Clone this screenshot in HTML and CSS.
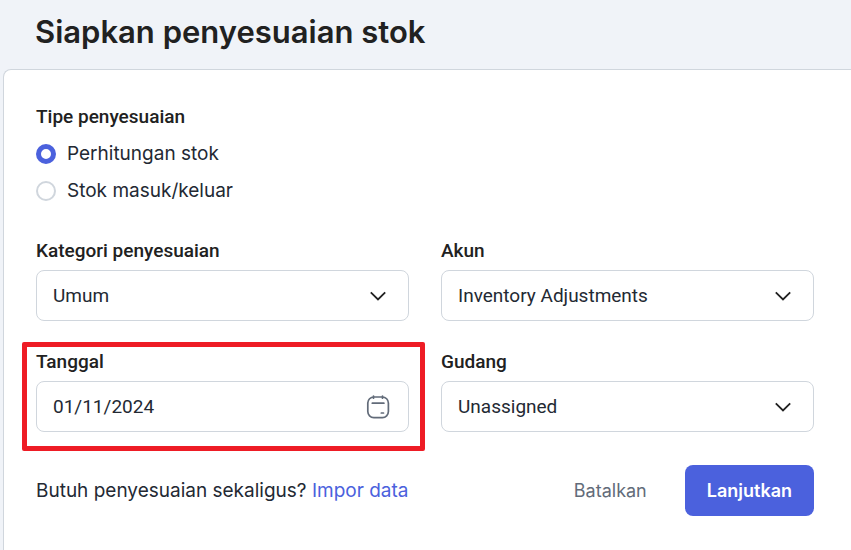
FILE: index.html
```html
<!DOCTYPE html>
<html lang="id">
<head>
  <meta charset="UTF-8">
  <title>Siapkan penyesuaian stok</title>
  <meta name="viewport" content="width=device-width, initial-scale=1">
  <link rel="stylesheet" href="styles.css">
</head>
<body>
  <header>
    <h1>Siapkan penyesuaian stok</h1>
  </header>

  <main>
    <form class="card">
      <fieldset class="type-group">
        <legend>Tipe penyesuaian</legend>
        <label class="radio">
          <input type="radio" name="type" value="count" checked>
          <span>Perhitungan stok</span>
        </label>
        <label class="radio">
          <input type="radio" name="type" value="inout">
          <span>Stok masuk/keluar</span>
        </label>
      </fieldset>

      <div class="fields">
        <div class="field">
          <label for="category">Kategori penyesuaian</label>
          <div class="control">
            <select id="category">
              <option>Umum</option>
            </select>
            <svg class="chevron" width="24" height="24" viewBox="0 0 24 24" fill="none" stroke="currentColor" stroke-width="1.8">
              <path d="M4.8 8.3l7.2 7.2 7.2-7.2"></path>
            </svg>
          </div>
        </div>

        <div class="field">
          <label for="account">Akun</label>
          <div class="control">
            <select id="account">
              <option>Inventory Adjustments</option>
            </select>
            <svg class="chevron" width="24" height="24" viewBox="0 0 24 24" fill="none" stroke="currentColor" stroke-width="1.8">
              <path d="M4.8 8.3l7.2 7.2 7.2-7.2"></path>
            </svg>
          </div>
        </div>

        <div class="field highlight">
          <label for="date">Tanggal</label>
          <div class="control">
            <input type="text" id="date" value="01/11/2024">
            <svg class="calendar" width="24" height="24" viewBox="0 0 24 24" fill="none" stroke="currentColor" stroke-width="1.7" stroke-linecap="round">
              <rect x="1.8" y="2" width="20.6" height="20.6" rx="6"></rect>
              <path d="M7.5 1v2.2M16.5 1v2.2M6.3 8.2h11.6"></path>
              <path d="M15.3 18h2.2"></path>
            </svg>
          </div>
        </div>

        <div class="field">
          <label for="warehouse">Gudang</label>
          <div class="control">
            <select id="warehouse">
              <option>Unassigned</option>
            </select>
            <svg class="chevron" width="24" height="24" viewBox="0 0 24 24" fill="none" stroke="currentColor" stroke-width="1.8">
              <path d="M4.8 8.3l7.2 7.2 7.2-7.2"></path>
            </svg>
          </div>
        </div>
      </div>

      <div class="actions">
        <p>Butuh penyesuaian sekaligus? <a href="#">Impor data</a></p>
        <div class="buttons">
          <button type="button" class="btn-text">Batalkan</button>
          <button type="submit" class="btn-primary">Lanjutkan</button>
        </div>
      </div>
    </form>
  </main>
</body>
</html>
```
FILE: styles.css
```css
:root {
  --primary: #4b61dd;
  --dark: #212121;
  --text: #232933;
  --gray: #626b79;
  --border: #d0d6dd;
  --page: #f0f3f8;
  --highlight: #ee1c25;
}

* {
  margin: 0;
  padding: 0;
  box-sizing: border-box;
}

body {
  font-family: Inter, sans-serif;
  font-size: 19px;
  line-height: 26px;
  background: var(--page);
  color: var(--text);
  min-height: 100vh;
  display: flex;
  flex-direction: column;
}

header {
  padding: 12px 35px 17px;
}

h1 {
  font-size: 31px;
  font-weight: 600;
  line-height: 40px;
  color: var(--dark);
}

main {
  flex: 1;
  display: flex;
  padding-left: 3px;
}

.card {
  flex: 1;
  background: white;
  border: 1px solid var(--border);
  border-width: 1px 0 0 1px;
  border-radius: 8px 0 0 0;
  padding: 34px 37px 34px 32px;
}

.type-group {
  border: none;
  margin-bottom: 34px;
}

legend,
.field label {
  font-family: Roboto, sans-serif;
  font-weight: 500;
  color: var(--dark);
}

.radio {
  display: flex;
  align-items: center;
  gap: 11px;
  margin-top: 11px;
}

.radio input {
  appearance: none;
  width: 20px;
  height: 20px;
  border: 2px solid var(--border);
  border-radius: 50%;
  background: white;
}

.radio input:checked {
  border: 5px solid var(--primary);
}

.fields {
  display: grid;
  grid-template-columns: 1fr 1fr;
  gap: 28px 32px;
}

.field {
  position: relative;
  display: flex;
  flex-direction: column;
  gap: 6px;
}

.control {
  display: grid;
  align-items: center;
}

.control > * {
  grid-area: 1 / 1;
}

.control select,
.control input {
  appearance: none;
  width: 100%;
  height: 51px;
  padding: 0 56px 0 16px;
  border: 1px solid var(--border);
  border-radius: 8px;
  background: white;
  font-family: Roboto, sans-serif;
  font-size: 19px;
  color: var(--text);
}

.chevron,
.calendar {
  justify-self: end;
  margin-right: 19px;
  pointer-events: none;
}

.chevron {
  color: var(--dark);
}

.calendar {
  color: var(--gray);
}

.highlight::after {
  content: "";
  position: absolute;
  inset: -7px -16px -19px -14px;
  border: 5px solid var(--highlight);
  border-radius: 2px;
  pointer-events: none;
}

.actions {
  display: flex;
  align-items: center;
  justify-content: space-between;
  margin-top: 33px;
}

.actions a {
  color: var(--primary);
  text-decoration: none;
}

.buttons {
  display: flex;
  gap: 16px;
}

button {
  height: 51px;
  padding: 0 22px;
  border: none;
  border-radius: 8px;
  font-family: Inter, sans-serif;
  font-size: 18px;
  cursor: pointer;
}

.btn-text {
  background: none;
  color: var(--gray);
}

.btn-primary {
  background: var(--primary);
  color: white;
  font-weight: 600;
}
```
